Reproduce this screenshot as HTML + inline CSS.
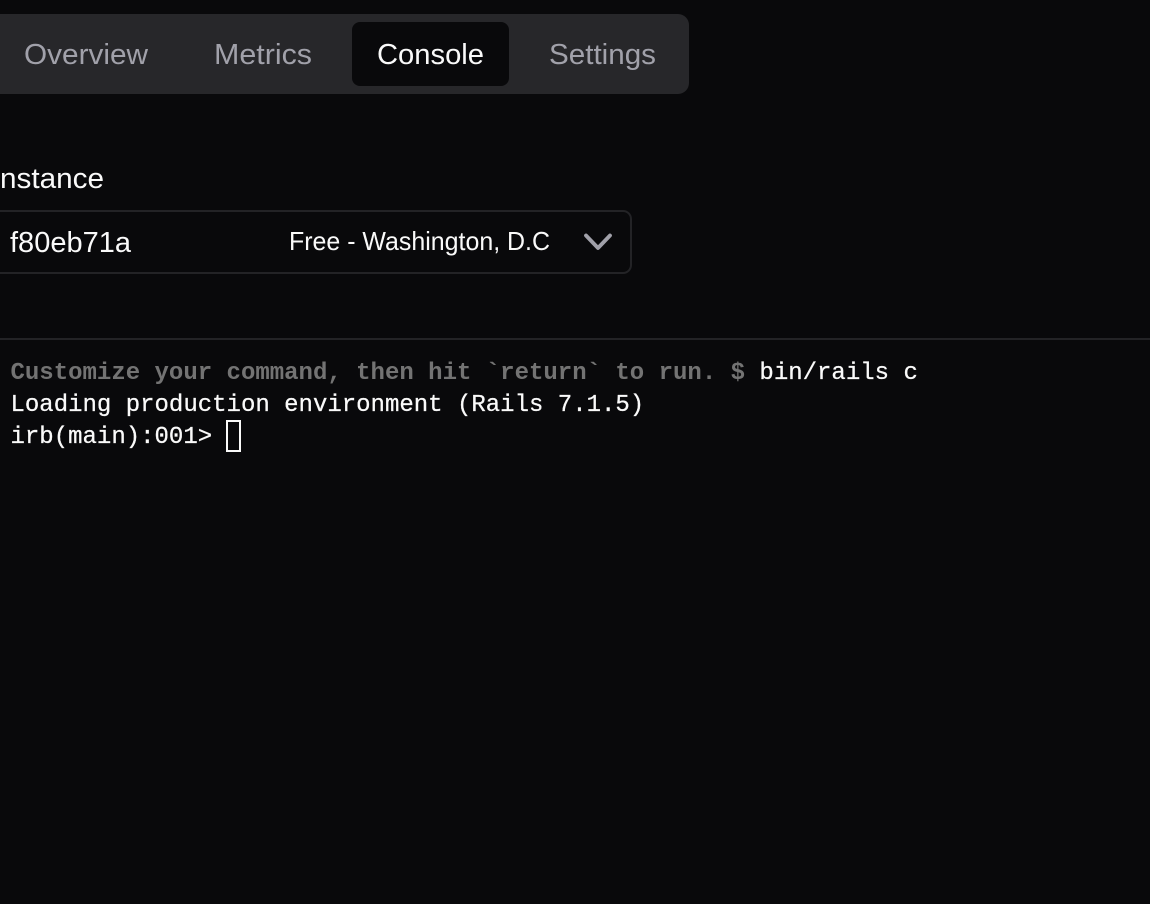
<!DOCTYPE html>
<html lang="en">
<head>
<meta charset="utf-8">
<title>Console</title>
<style>
html,body{margin:0;padding:0;width:1150px;height:904px;overflow:hidden;background:#09090b}
svg{display:block;position:absolute;left:0;top:0}
.s{font-family:"Liberation Sans",sans-serif}
.m{font-family:"Liberation Mono",monospace;font-size:24px;fill:#fafafa;white-space:pre;stroke:#fafafa;stroke-width:.25px}
.g{fill:#737373;stroke:none;font-weight:700}
</style>
</head>
<body>
<svg width="1150" height="904" viewBox="0 0 1150 904" xmlns="http://www.w3.org/2000/svg">
  <rect x="-20" y="14" width="709" height="80" rx="11" fill="#27272a"/>
  <rect x="352" y="22" width="157" height="64" rx="8" fill="#09090b"/>
  <g class="s" font-size="29">
    <text x="24" y="64" fill="#a1a1aa" textLength="124" lengthAdjust="spacingAndGlyphs">Overview</text>
    <text x="214" y="64" fill="#a1a1aa" textLength="98" lengthAdjust="spacingAndGlyphs">Metrics</text>
    <text x="377" y="64" fill="#fafafa" textLength="107" lengthAdjust="spacingAndGlyphs">Console</text>
    <text x="549" y="64" fill="#a1a1aa" textLength="107" lengthAdjust="spacingAndGlyphs">Settings</text>
    <text x="0" y="188" fill="#fafafa" textLength="104" lengthAdjust="spacingAndGlyphs">nstance</text>
    <text x="10" y="252" fill="#fafafa" textLength="121" lengthAdjust="spacingAndGlyphs">f80eb71a</text>
    <text x="289" y="250" fill="#fafafa" font-size="26" textLength="261" lengthAdjust="spacingAndGlyphs">Free - Washington, D.C</text>
  </g>
  <rect x="-20" y="211" width="651" height="62" rx="8" fill="none" stroke="#232326" stroke-width="2"/>
  <path d="M586 235.500L598 248L610 235.500" fill="none" stroke="#a1a1aa" stroke-width="3.800" stroke-linecap="round" stroke-linejoin="round"/>
  <rect x="0" y="338" width="1150" height="2" fill="#232326"/>
  <text class="m" x="10.500" y="379" xml:space="preserve"><tspan class="g">Customize your command, then hit `return` to run. $ </tspan><tspan>bin/rails c</tspan></text>
  <text class="m" x="10.500" y="411" xml:space="preserve">Loading production environment (Rails 7.1.5)</text>
  <text class="m" x="10.500" y="443" xml:space="preserve">irb(main):001&gt;</text>
  <rect x="227" y="421" width="13" height="30" fill="none" stroke="#fafafa" stroke-width="2"/>
</svg>
</body>
</html>
